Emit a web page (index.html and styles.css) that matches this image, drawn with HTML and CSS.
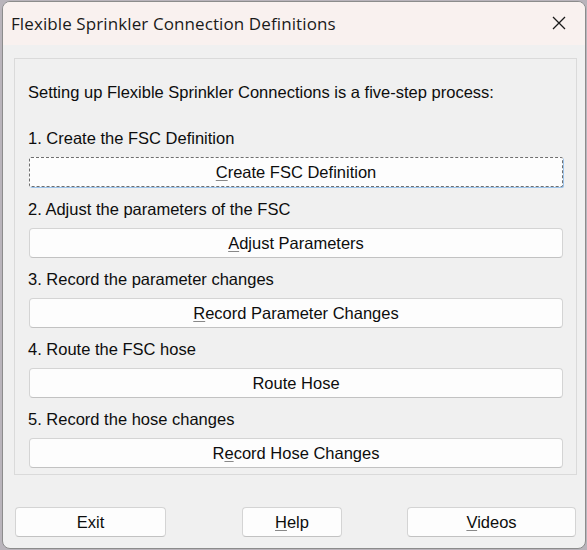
FILE: index.html
```html
<!DOCTYPE html>
<html>
<head>
<meta charset="utf-8">
<link rel="stylesheet" href="styles.css">
</head>
<body>
<div class="window">
  <div class="titlebar">
    <span class="title">Flexible Sprinkler Connection Definitions</span>
    <svg class="close" width="16" height="16" viewBox="0 0 16 16"><path d="M2 2 L14 14 M14 2 L2 14" stroke="#1a1a1a" stroke-width="1.3" fill="none"/></svg>
  </div>
  <div class="content">
    <div class="group">
      <div class="intro">Setting up Flexible Sprinkler Connections is a five-step process:</div>
      <div class="step first">
        <div class="label">1. Create the FSC Definition</div>
        <button class="btn wide focused"><u>C</u>reate FSC Definition</button>
      </div>
      <div class="step">
        <div class="label">2. Adjust the parameters of the FSC</div>
        <button class="btn wide"><u>A</u>djust Parameters</button>
      </div>
      <div class="step">
        <div class="label">3. Record the parameter changes</div>
        <button class="btn wide"><u>R</u>ecord Parameter Changes</button>
      </div>
      <div class="step">
        <div class="label">4. Route the FSC hose</div>
        <button class="btn wide">Route Hose</button>
      </div>
      <div class="step">
        <div class="label">5. Record the hose changes</div>
        <button class="btn wide">R<u>e</u>cord Hose Changes</button>
      </div>
    </div>
    <div class="footer">
      <button class="btn exit">Exit</button>
      <button class="btn help"><u>H</u>elp</button>
      <button class="btn videos"><u>V</u>ideos</button>
    </div>
  </div>
</div>
</body>
</html>
```

FILE: styles.css
```css
html, body {
  margin: 0;
  padding: 0;
}
body {
  width: 587px;
  height: 550px;
  background: #b9b4bb;
  font-family: "Liberation Sans", Arial, sans-serif;
  overflow: hidden;
}
.window {
  box-sizing: border-box;
  margin: 1px 1px 0 2px;
  width: 584px;
  height: 548px;
  border: 1px solid #8c8c8c;
  border-radius: 8px;
  background: #f0f0f0;
  overflow: hidden;
  display: flex;
  flex-direction: column;
}
.titlebar {
  height: 42px;
  background: #f9f1ef;
  display: flex;
  align-items: center;
  justify-content: space-between;
  padding: 0 18px 1px 8px;
  flex: none;
}
.title {
  font-family: "Open Sans", "Noto Sans", sans-serif;
  font-size: 17px;
  color: #1a1a1a;
  letter-spacing: 0.1px;
}
.close {
  display: block;
}
.content {
  padding: 13px 8px 0 11px;
  display: flex;
  flex-direction: column;
}
.group {
  border: 1px solid #dadada;
  padding: 23px 13px 6px 13px;
  display: flex;
  flex-direction: column;
}
.intro, .label {
  font-size: 16.5px;
  line-height: 20px;
  height: 20px;
  color: #0d0d0d;
}
.intro {
  margin-bottom: 26px;
}
.step {
  display: flex;
  flex-direction: column;
}
.label {
  margin-bottom: 9px;
}
.btn {
  font-family: "Liberation Sans", Arial, sans-serif;
  font-size: 16.5px;
  color: #0d0d0d;
  background: #fdfdfd;
  border: 1px solid #d4d4d4;
  border-bottom-color: #c2c2c2;
  border-radius: 4px;
  height: 30px;
  padding: 0;
  cursor: default;
}
.btn u {
  text-decoration-color: #888;
  text-underline-offset: 2px;
}
.wide {
  margin-left: 1px;
  margin-bottom: 11px;
}
.first .wide {
  margin-bottom: 12px;
}
.step:last-child .wide {
  margin-bottom: 0;
}
.focused {
  border: 1px dashed #6f6f6f;
  border-radius: 2px;
  box-shadow: 1px 1px 0 #9cc3ea;
}
.footer {
  display: flex;
  justify-content: space-between;
  margin-top: 32px;
  padding: 0 1px 0 1px;
}
.exit {
  width: 151px;
}
.help {
  width: 100px;
  margin-left: 75px;
}
.videos {
  width: 169px;
  margin-left: 64px;
}
```
